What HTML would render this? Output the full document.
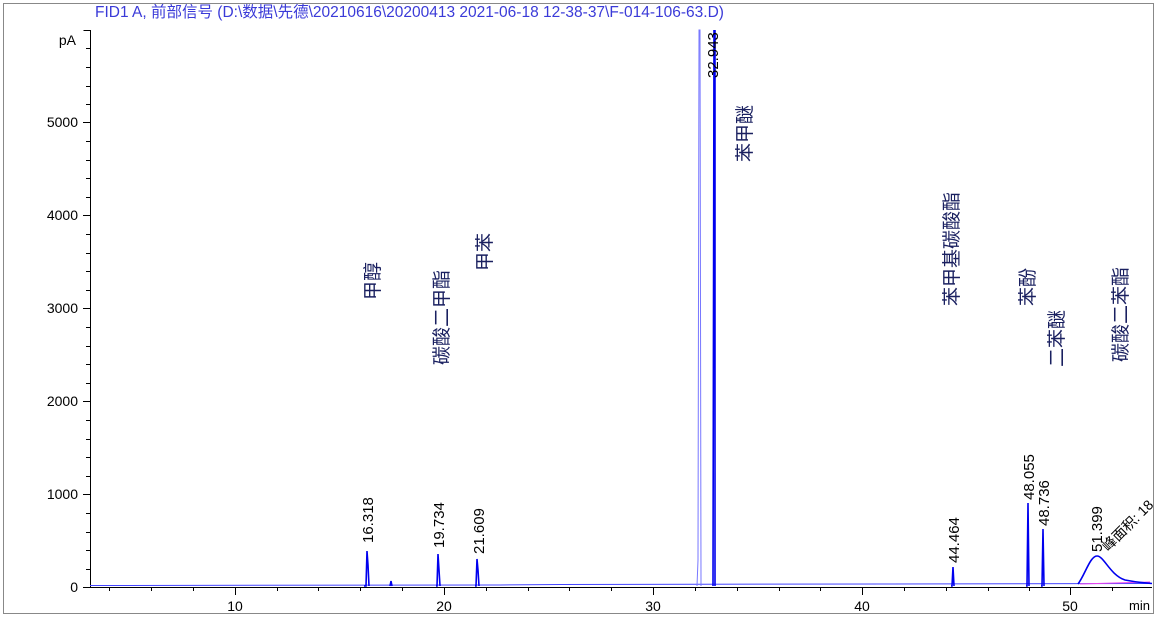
<!DOCTYPE html><html><head><meta charset="utf-8"><style>html,body{margin:0;padding:0;background:#fff}svg{display:block}</style></head><body>
<svg width="1155" height="619" viewBox="0 0 1155 619" xmlns="http://www.w3.org/2000/svg" font-family="Liberation Sans, Noto Sans CJK SC, sans-serif">
<rect x="3.5" y="3.5" width="1150" height="610" fill="none" stroke="#888" stroke-width="1"/>
<text x="95" y="17" font-size="15.5" fill="#3a3ad8">FID1 A, 前部信号 (D:\数据\先德\20210616\20200413 2021-06-18 12-38-37\F-014-106-63.D)</text>
<g stroke="#000" stroke-width="1" fill="none">
<path d="M83.5 30.5H90.5V587.5H1152"/>
<path d="M83 122.5H90M83 215.5H90M83 308.5H90M83 401.5H90M83 494.5H90M83 587.5H90"/>
<path d="M86 48.5H90M86 67.5H90M86 86.5H90M86 104.5H90M86 141.5H90M86 160.5H90M86 178.5H90M86 197.5H90M86 234.5H90M86 253.5H90M86 271.5H90M86 290.5H90M86 327.5H90M86 346.5H90M86 364.5H90M86 383.5H90M86 420.5H90M86 439.5H90M86 457.5H90M86 476.5H90M86 513.5H90M86 532.5H90M86 550.5H90M86 569.5H90"/>
<path d="M235.5 587V595M444.5 587V595M653.5 587V595M862.5 587V595M1070.5 587V595"/>
<path d="M109.5 587V591M151.5 587V591M193.5 587V591M277.5 587V591M318.5 587V591M360.5 587V591M402.5 587V591M486.5 587V591M528.5 587V591M569.5 587V591M611.5 587V591M695.5 587V591M737.5 587V591M779.5 587V591M820.5 587V591M904.5 587V591M946.5 587V591M988.5 587V591M1029.5 587V591M1112.5 587V591"/>
</g>
<g font-size="14" fill="#000" text-anchor="end">
<text x="76" y="45">pA</text>
<text x="78" y="127">5000</text><text x="78" y="220">4000</text><text x="78" y="313">3000</text><text x="78" y="406">2000</text><text x="78" y="499">1000</text><text x="78" y="592">0</text>
</g>
<g font-size="14" fill="#000" text-anchor="middle">
<text x="235" y="611">10</text><text x="444" y="611">20</text><text x="653" y="611">30</text><text x="862" y="611">40</text><text x="1070" y="611">50</text>
</g>
<text x="1129" y="610" font-size="13">min</text>
<path d="M90 585.5L500 585L560 584.5L1152 583.5" stroke="#4444ff" stroke-width="1" fill="none"/>
<path d="M1080 584L1150 582" stroke="#ee44ee" stroke-width="1"/>
<g stroke="#0000ee" stroke-width="1.6" fill="none">
<path d="M364 586L366 586L367 551L368 565L369 586"/>
<path d="M390 586L391 581L392 586"/>
<path d="M436 586L437 586L438 554L439 570L440 586"/>
<path d="M475 586L476 586L477 559L478 570L479 586"/>
<path d="M713 586L714 30M715 30L715 586"/>
<path d="M951 586L952 586L953 567L954 586"/>
<path d="M1026 586L1027 586L1028 503L1029 586"/>
<path d="M1041 586L1042 586L1043 529L1044 586"/>
<path d="M1078 584C1085 575 1090 556 1097 556C1104 556 1110 575 1125 580C1135 582 1145 583 1152 583.5"/>
</g>
<path d="M697 586L698 560L699 30L700 30L701 586" stroke="#7777ff" stroke-width="1" fill="none"/>
<g font-size="15" fill="#000">
<text transform="translate(373,543) rotate(-90)">16.318</text>
<text transform="translate(444,548) rotate(-90)">19.734</text>
<text transform="translate(484,554) rotate(-90)">21.609</text>
<text transform="translate(718,78) rotate(-90)">32.943</text>
<text transform="translate(959,563) rotate(-90)">44.464</text>
<text transform="translate(1034,500) rotate(-90)">48.055</text>
<text transform="translate(1049,526) rotate(-90)">48.736</text>
<text transform="translate(1102,552) rotate(-90)">51.399</text>
<text transform="translate(1108,552) rotate(-45)" font-size="14">峰面积: 18</text>
</g>
<g font-size="19" fill="#1a2060">
<text transform="translate(379,300) rotate(-90)">甲醇</text>
<text transform="translate(448,365) rotate(-90)">碳酸二甲酯</text>
<text transform="translate(491,271) rotate(-90)">甲苯</text>
<text transform="translate(751,162) rotate(-90)">苯甲醚</text>
<text transform="translate(958,306) rotate(-90)">苯甲基碳酸酯</text>
<text transform="translate(1034,306) rotate(-90)">苯酚</text>
<text transform="translate(1063,367) rotate(-90)">二苯醚</text>
<text transform="translate(1127,362) rotate(-90)">碳酸二苯酯</text>
</g>
</svg>
</body></html>
